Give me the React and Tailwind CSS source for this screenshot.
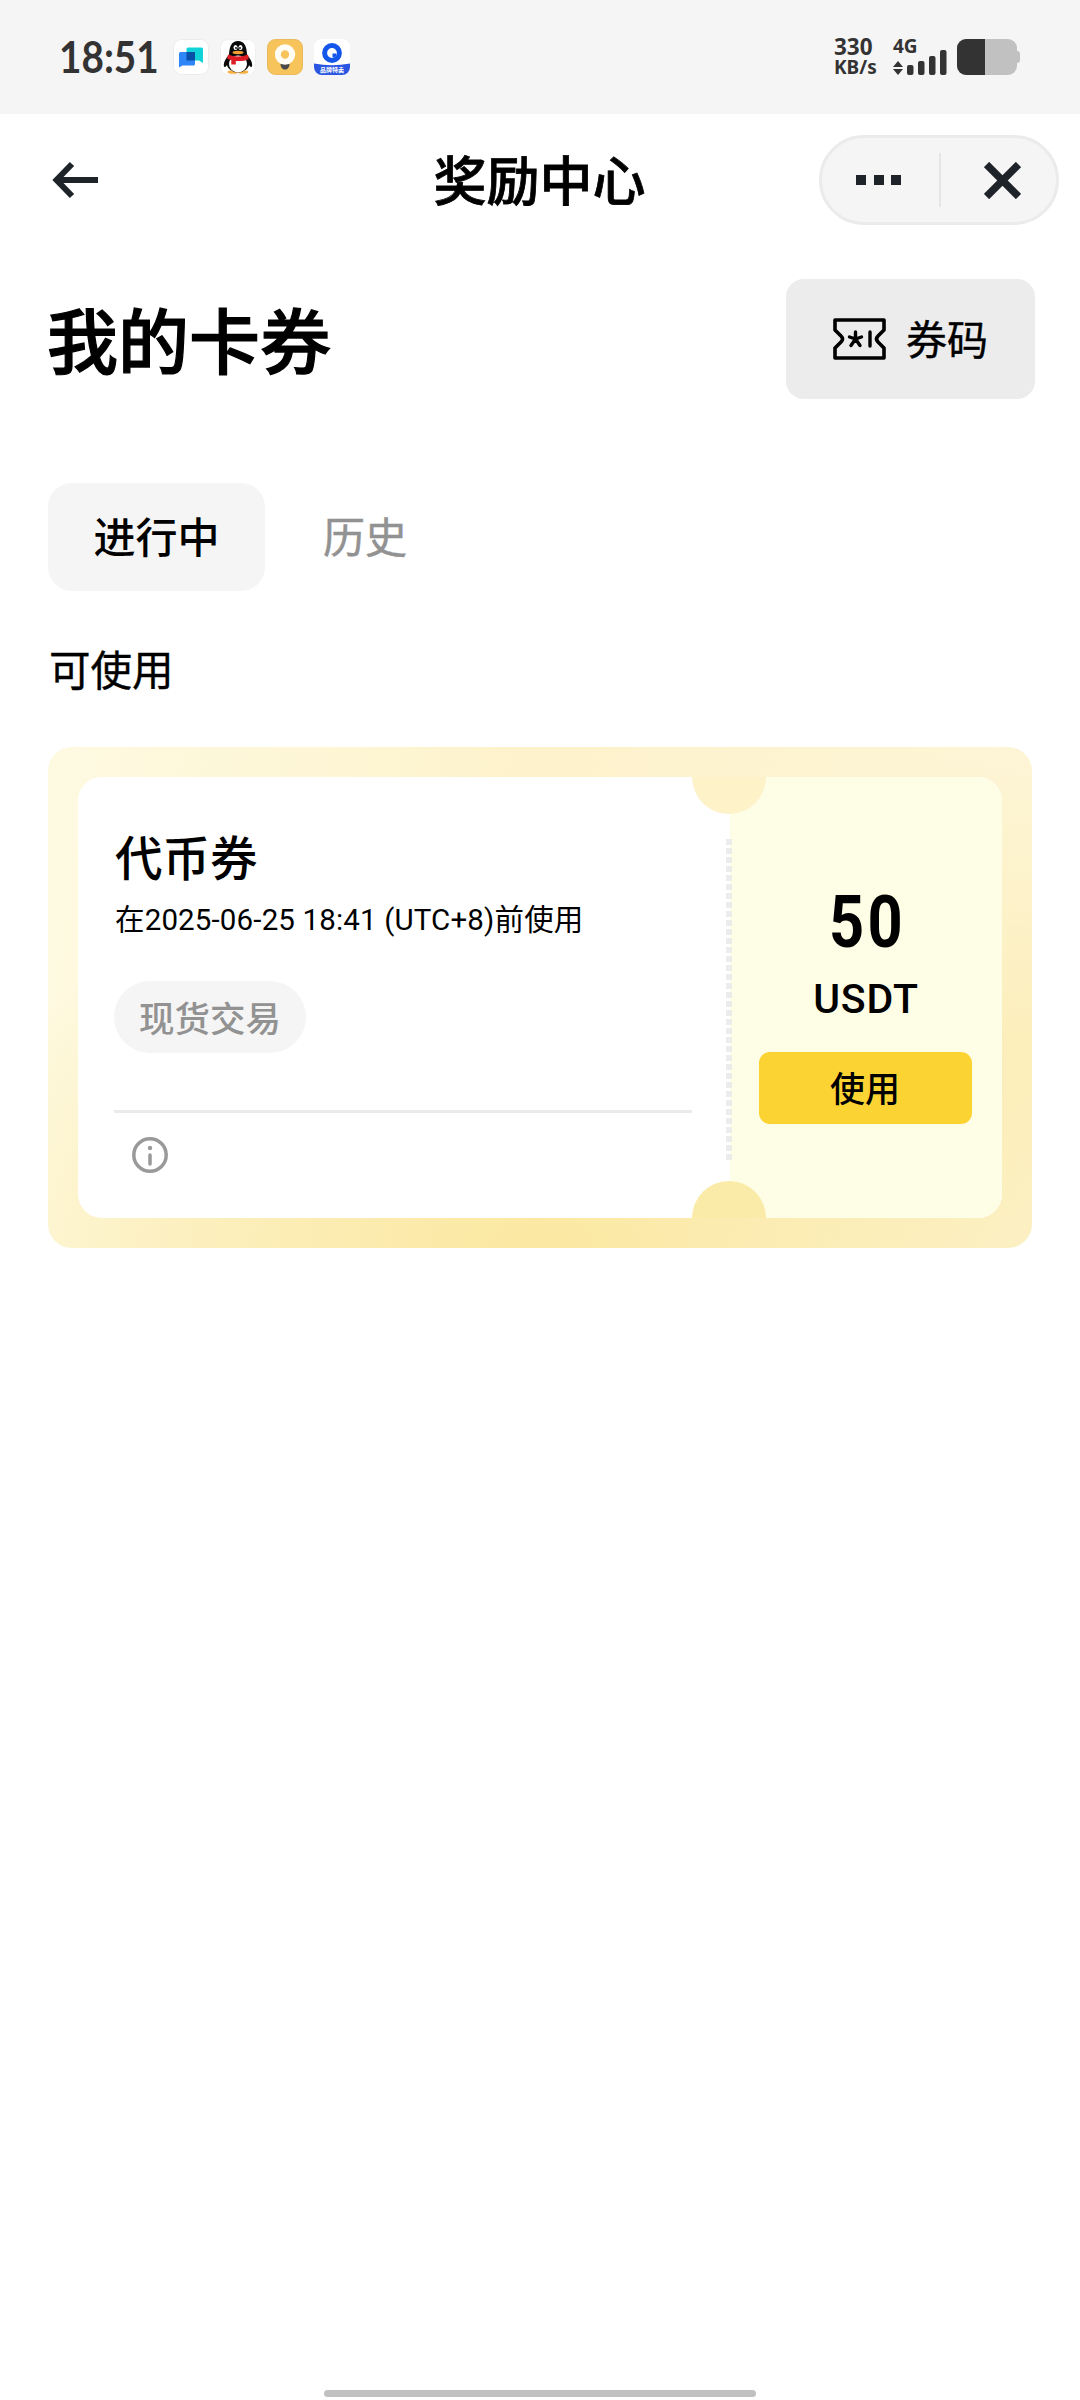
const cjk = 'font-["Noto_Sans_CJK_SC",sans-serif]'

function ChatAppIcon() {
  return (
    <svg className="w-9 h-9" viewBox="0 0 36 36">
      <rect x="0.5" y="0.5" width="35" height="35" rx="8" fill="#fff" stroke="#ececec" />
      <path d="M15 8.500h13.500a1.500 1.500 0 0 1 1.500 1.500v14l-4-2.500H15a1.500 1.500 0 0 1-1.500-1.500V10a1.500 1.500 0 0 1 1.500-1.500z" fill="#0fd3d8" />
      <path d="M7.500 13h14.500v12a1.500 1.500 0 0 1-1.500 1.500H9.500l-3.500 2V14.500A1.500 1.500 0 0 1 7.500 13z" fill="#2f86f6" />
      <path d="M13.500 13H22v8.500h-8.500z" fill="#084fa8" />
    </svg>
  )
}

function PenguinAppIcon() {
  return (
    <svg className="w-9 h-9" viewBox="0 0 36 36">
      <rect x="0.5" y="0.5" width="35" height="35" rx="8" fill="#fff" stroke="#f0f0f0" />
      <ellipse cx="13" cy="33" rx="5.500" ry="1.800" fill="#f5b040" />
      <ellipse cx="23" cy="33" rx="5.500" ry="1.800" fill="#f5b040" />
      <path d="M9 16c-3 3-6 8-5 11.500 1 1.500 3-1 4-3zM27 16c3 3 6 8 5 11.500-1 1.500-3-1-4-3z" fill="#0a0a0a" />
      <ellipse cx="18" cy="23.500" rx="11.500" ry="10" fill="#0a0a0a" />
      <path d="M9 17C9 7 12 2 18 2s9 5 9 15z" fill="#0a0a0a" />
      <ellipse cx="18" cy="25" rx="9" ry="8.500" fill="#fff" />
      <ellipse cx="15.500" cy="8.500" rx="2" ry="2.600" fill="#fff" />
      <ellipse cx="20.500" cy="8.500" rx="2" ry="2.600" fill="#fff" />
      <circle cx="16" cy="9" r="0.900" fill="#000" />
      <circle cx="20" cy="9" r="0.900" fill="#000" />
      <ellipse cx="18" cy="13.500" rx="5.500" ry="1.700" fill="#f5a030" />
      <path d="M8 15.500c6 2.500 14 2.500 20 0l.8 4.500c-4 2-8.500 2.300-13 2v3.500h-4.500v-4.500c-1.500-.2-2.800-.6-4.100-1.200z" fill="#dd1c26" />
    </svg>
  )
}

function BulbAppIcon() {
  return (
    <svg className="w-9 h-9" viewBox="0 0 36 36">
      <rect x="0.5" y="0.5" width="35" height="35" rx="8" fill="#f7c45b" stroke="#e9b95a" />
      <path d="M13.500 25h9c0 3.500-2 5.500-4.500 5.500s-4.500-2-4.500-5.500z" fill="#4a4a4a" />
      <circle cx="18" cy="15.500" r="7.200" fill="none" stroke="#fffdf5" strokeWidth="6" />
    </svg>
  )
}

function BrowserAppIcon() {
  return (
    <div className="relative w-9 h-9 rounded-lg overflow-hidden bg-white">
      <svg className="w-9 h-9" viewBox="0 0 36 36">
        <path d="M0 24.500q18 3.500 36 0v11.500H0z" fill="#2a55e0" />
        <circle cx="18" cy="14" r="7.400" fill="none" stroke="#1456ea" strokeWidth="5" />
        <path d="M18.500 14.500h4c0 3-1.500 4-4 4z" fill="#1456ea" />
      </svg>
      <span className="absolute inset-x-0 bottom-[1px] text-center text-[6px] leading-[8px] font-bold text-white">品牌特卖</span>
    </div>
  )
}

function StatusBar() {
  return (
    <header className="flex items-center h-[114px] pl-[59px] pr-[60px] bg-[#f5f5f5] text-[#333]">
      <div className="w-[114px]">
        <span className="inline-block origin-left scale-x-[0.9] font-['Lato'] text-[43px] leading-[50px] font-bold">18:51</span>
      </div>
      <div className="flex gap-[11px]">
        <ChatAppIcon />
        <PenguinAppIcon />
        <BulbAppIcon />
        <BrowserAppIcon />
      </div>
      <div className="flex items-center ml-auto">
        <div className="w-[59px] font-['Noto_Sans'] font-bold">
          <div className="text-[22.5px] leading-[20px]">330</div>
          <div className="text-[19px] leading-[20px]">KB/s</div>
        </div>
        <svg className="w-[64px] h-9 overflow-visible" viewBox="0 0 64 36" fill="#333">
          <text x="0" y="14" fontSize="19" fontWeight="700" fontFamily="Noto Sans">4G</text>
          <path d="M5 22l5 6H0zM5 36l5-6H0z" />
          <rect x="14" y="26" width="6.500" height="10" rx="2" />
          <rect x="25" y="22" width="6.500" height="14" rx="2" />
          <rect x="36" y="17" width="6.500" height="19" rx="2" />
          <rect x="47" y="11" width="6.500" height="25" rx="2" />
        </svg>
        <div className="flex items-center">
          <div className="flex w-[60px] h-9 rounded-[9px] overflow-hidden bg-[#c1c1c1]">
            <div className="w-[28px] bg-[#333]" />
          </div>
          <div className="w-[3px] h-3 rounded-r bg-[#c1c1c1]" />
        </div>
      </div>
    </header>
  )
}

function NavBar() {
  return (
    <nav className="flex items-center justify-between h-[132px] pl-[52px] pr-[21px] text-[#1e2329]">
      <svg className="w-[208px] h-[38px]" viewBox="0 0 208 38" fill="none" stroke="currentColor" strokeWidth="6">
        <path d="M46 19H6M20 3L4.500 19 20 35" />
      </svg>
      <h1 className="mb-1 text-[53px] leading-[60px] font-medium text-black [-webkit-text-stroke:0.8px_black]">奖励中心</h1>
      <div className="flex items-center w-[240px] h-[90px] rounded-full border-3 border-[#ebebeb] bg-[#f5f5f5]">
        <div className="flex justify-center gap-[7.500px] w-[117px] pr-[4px]">
          <span className="w-2.5 h-2.5 bg-current" />
          <span className="w-2.5 h-2.5 bg-current" />
          <span className="w-2.5 h-2.5 bg-current" />
        </div>
        <div className="w-0.5 h-[54px] bg-[#e6e6e6]" />
        <svg className="ml-[43px] w-[37px] h-[37px]" viewBox="0 0 37 37" stroke="currentColor" strokeWidth="7.500">
          <path d="M2.500 2.500l32 32M34.500 2.500l-32 32" />
        </svg>
      </div>
    </nav>
  )
}

function TicketIcon() {
  return (
    <svg className="w-[53px] h-[42px]" viewBox="0 0 53 42" fill="none" stroke="currentColor" strokeWidth="3.600" strokeLinejoin="round" strokeLinecap="round">
      <path d="M2 2h49v10l-6 6q-3 3 0 6l6 6v10H2V30l6-6q3-3 0-6l-6-6z" />
      <path d="M22.500 14v7M22.500 21l-6-2M22.500 21l6-2M22.500 21l-4.500 6.500M22.500 21l4.500 6.500M37 14v14" strokeWidth="3.400" />
    </svg>
  )
}

function Coupon() {
  return (
    <section className="mt-[49px] w-[984px] h-[501px] p-[30px] rounded-3xl bg-[radial-gradient(ellipse_65%_75%_at_50%_100%,#fbe8a2_0%,#fbe8a200_100%),radial-gradient(ellipse_35%_60%_at_100%_60%,#fcefbc_0%,#fcefbc00_100%),linear-gradient(100deg,#fefae2_0%,#fdf2cb_45%,#fdf5d8_100%)]">
      <div className="relative flex h-full w-[924px] rounded-[24px] overflow-hidden bg-white">
        <div className="w-[652px] pl-9 pt-[49px]">
          <h3 className="pl-px text-[47.500px] leading-[60px] font-medium">代币券</h3>
          <p className="mt-[14px] pl-px font-['Roboto','Noto_Sans_CJK_SC',sans-serif] text-[29.500px] leading-[40px] tracking-[0.15px] whitespace-nowrap">
            在2025-06-25 18:41 (UTC+8)前使用
          </p>
          <span className="mt-[41px] flex items-center justify-center w-[192px] h-[72px] rounded-full bg-[#f5f5f5] text-[35.500px] font-medium text-[#929292]">
            现货交易
          </span>
          <div className="mt-[57px] w-[578px] h-[3px] bg-[#ebebeb]" />
          <svg className="mt-6 ml-[18px] w-9 h-9" viewBox="0 0 36 36" fill="none" stroke="#999" strokeWidth="3.500" strokeLinecap="round">
            <circle cx="18" cy="18" r="16.200" />
            <path d="M18 18v9" />
            <circle cx="18" cy="11" r="2.200" fill="#999" stroke="none" />
          </svg>
        </div>
        <div className="flex flex-col items-center w-[272px] pt-[105px] pr-[2px] bg-[#fefde6]">
          <span className="font-['Roboto'] text-[73px] leading-[80px] font-bold tracking-[4px] pl-[5px] scale-x-[0.84]">50</span>
          <span className="mt-[12px] pl-[2px] font-['Roboto'] text-[41px] leading-[50px] font-medium tracking-[0.8px]">USDT</span>
          <button className="mt-[28px] pb-[2px] w-[213px] h-[72px] rounded-[11px] bg-[#fbd434] text-[35px] font-medium">使用</button>
        </div>
        <div className="absolute left-[614px] -top-[37px] w-[74px] h-[74px] rounded-full bg-[#fdf2c8]" />
        <div className="absolute left-[614px] -bottom-[37px] w-[74px] h-[74px] rounded-full bg-[#fbeba8]" />
        <div className="absolute left-[648px] top-[62px] w-1.5 h-[324px] bg-[repeating-linear-gradient(to_bottom,#ececec_0_6px,transparent_6px_9px)]" />
      </div>
    </section>
  )
}

export default function App() {
  return (
    <div className={`flex flex-col w-[1080px] h-[2400px] bg-white text-black ${cjk}`}>
      <StatusBar />
      <NavBar />
      <main className="flex-1 pl-12 pr-[45px] pt-[33px]">
        <div className="flex items-center justify-between">
          <h2 className="-ml-px mb-1 text-[71px] leading-[90px] font-medium [-webkit-text-stroke:1.2px_black]">我的卡券</h2>
          <button className="flex items-center justify-center gap-5 w-[249px] h-[120px] rounded-[18px] bg-[#ececec] text-[41px] [-webkit-text-stroke:0.4px_black]">
            <TicketIcon />
            <span className="mb-[3px]">券码</span>
          </button>
        </div>
        <div className="flex items-center mt-[84px] text-[42px]">
          <button className="pb-[5px] w-[217px] h-[108px] rounded-3xl bg-[#f5f5f5] font-medium">进行中</button>
          <button className="ml-[58px] pb-[5px] text-[#929292] [-webkit-text-stroke:0.5px_#929292]">历史</button>
        </div>
        <h3 className="mt-[47px] pl-px text-[41.500px] leading-[60px] [-webkit-text-stroke:0.4px_black]">可使用</h3>
        <Coupon />
      </main>
      <div className="mx-auto mb-[3px] w-[432px] h-[7px] rounded-full bg-[#c1c1c1]" />
    </div>
  )
}
